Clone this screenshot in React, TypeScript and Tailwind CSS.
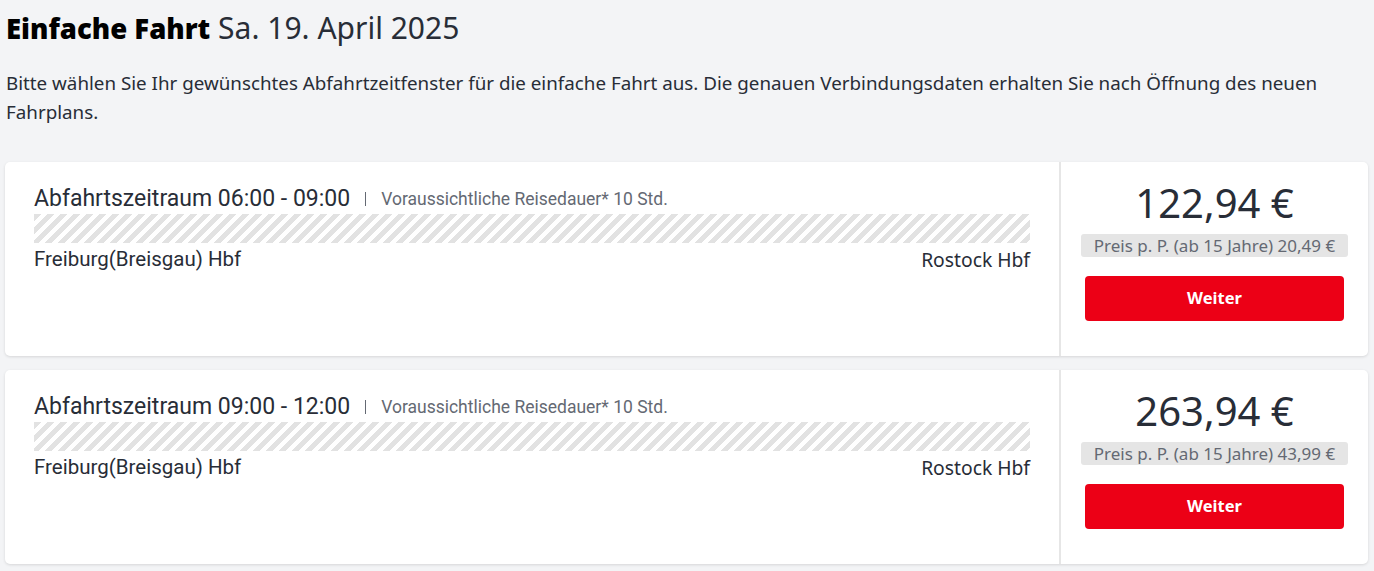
import React from 'react';

type Slot = {
  from: string;
  to: string;
  total: string;
  perPerson: string;
};

const slots: Slot[] = [
  { from: '06:00', to: '09:00', total: '122,94 €', perPerson: '20,49 €' },
  { from: '09:00', to: '12:00', total: '263,94 €', perPerson: '43,99 €' },
];

const SlotCard: React.FC<{ slot: Slot }> = ({ slot }) => {
  return (
    <div className="flex bg-white rounded-[5px] shadow-[0_1px_3px_rgba(0,0,0,0.12)] h-[194px]">
      {/* Connection info */}
      <div className="flex-1 pl-[29px] pr-[29px] pt-[22px]">
        <div className="flex items-center h-[30px]">
          <span className="font-['Roboto',sans-serif] text-[23px] text-[#282d37] leading-[30px]">
            Abfahrtszeitraum {slot.from} - {slot.to}
          </span>
          <span className="mx-[15px] w-px h-[14px] bg-[#646973]"></span>
          <span className="font-['Roboto',sans-serif] text-[17.5px] text-[#646973] leading-[30px]">
            Voraussichtliche Reisedauer* 10 Std.
          </span>
        </div>
        <div className="h-[29px] bg-[repeating-linear-gradient(135deg,#e2e2e2_0px,#e2e2e2_5px,#ffffff_5px,#ffffff_9.2px)]"></div>
        <div className="flex justify-between items-center mt-[3px] h-[27px]">
          <span className="font-['Roboto',sans-serif] text-[20.5px] leading-[27px] text-[#282d37]">Freiburg(Breisgau) Hbf</span>
          <span className="font-['Noto_Sans',sans-serif] text-[19.3px] leading-[27px] text-[#282d37]">Rostock Hbf</span>
        </div>
      </div>

      {/* Price */}
      <div className="w-[309px] border-l-2 border-[#e6e6e6] flex flex-col items-center pt-[14px]">
        <div className="font-['Noto_Sans',sans-serif] text-[40px] leading-[54px] text-[#282d37]">{slot.total}</div>
        <div className="mt-[4px] bg-[#e5e5e5] rounded-[3px] px-[13px] h-[23px] flex items-center font-['Noto_Sans',sans-serif] text-[17px] text-[#646973]">
          Preis p. P. (ab 15 Jahre) {slot.perPerson}
        </div>
        <button className="mt-[19px] w-[259px] h-[45px] bg-[#ec0016] rounded-[4px] text-white font-['Noto_Sans',sans-serif] font-bold text-[16.5px]">
          Weiter
        </button>
      </div>
    </div>
  );
};

const App: React.FC = () => {
  return (
    <div className="min-h-screen bg-[#f3f4f6] pl-[5px] pr-[6px] pt-[8px]">
      <h1 className="pl-[1px] font-['Noto_Sans',sans-serif] text-[30px] leading-[40px] text-[#282d37]">
        <span className="font-black text-[27.5px] text-black">Einfache Fahrt</span> Sa. 19. April 2025
      </h1>
      <p className="pl-[1px] mt-[20px] font-['Noto_Sans',sans-serif] text-[18.8px] leading-[29px] text-[#282d37]">
        Bitte wählen Sie Ihr gewünschtes Abfahrtzeitfenster für die einfache Fahrt aus. Die genauen Verbindungsdaten erhalten Sie nach Öffnung des neuen Fahrplans.
      </p>
      <div className="mt-[35px] flex flex-col gap-[14px]">
        {slots.map((s) => (
          <SlotCard key={s.from} slot={s} />
        ))}
      </div>
    </div>
  );
};

export default App;
